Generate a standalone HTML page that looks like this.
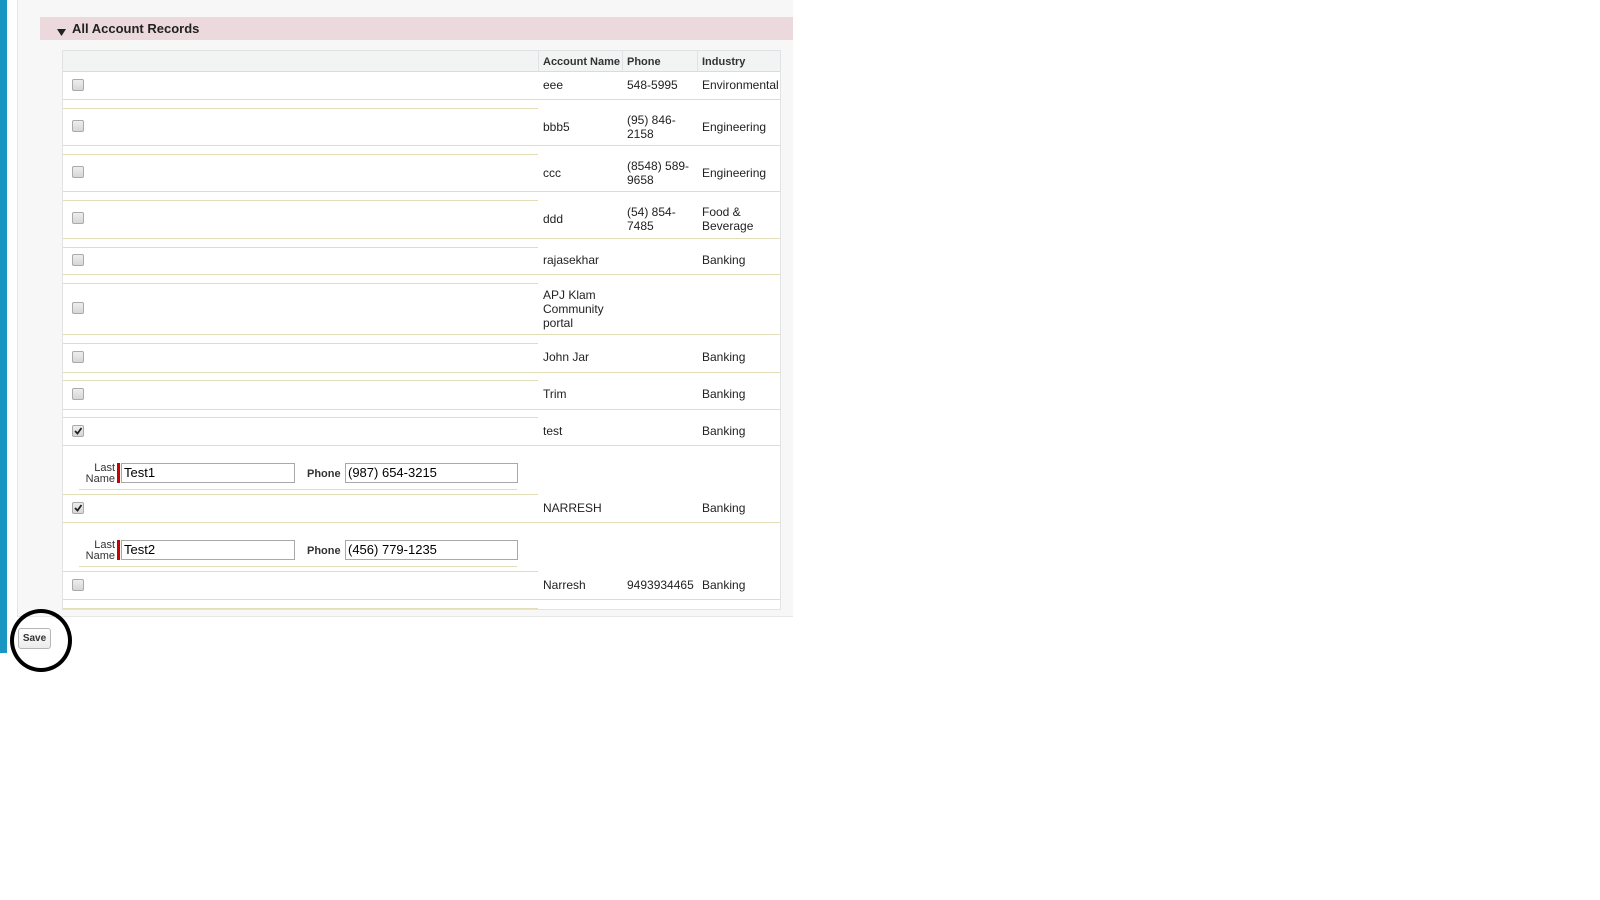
<!DOCTYPE html>
<html><head><meta charset="utf-8"><style>
*{margin:0;padding:0;box-sizing:border-box}
body{width:1600px;height:900px;background:#fff;position:relative;overflow:hidden;font-family:"Liberation Sans",Arial,sans-serif;font-size:12px;color:#222}
.a{position:absolute}
.hl{position:absolute;height:1px;background:#e3deb8}
.cb{position:absolute;left:72px;width:12px;height:12px;border:1px solid #aaa;border-radius:2px;background:linear-gradient(#eee,#d6d6d6)}
.t{position:absolute;font-size:12px;color:#222;line-height:14px}
.th{position:absolute;top:56px;font-weight:bold;font-size:11px;color:#333}
.vd{position:absolute;top:51px;width:1px;height:20px;background:#e0e3e5}
.inp{position:absolute;height:20px;border:1px solid #a9a9a9;background:#fff;font-size:13px;padding:1px 2px;color:#000;line-height:16px}
.lbl{position:absolute;font-size:11px;color:#333;text-align:right;line-height:11px}
</style></head><body>
<div class="a" style="left:0;top:0;width:7px;height:653px;background:#1a96c2"></div>
<div class="a" style="left:17px;top:0;width:776px;height:617px;background:#f7f7f7;border-left:1px solid #e6e6e6;border-bottom:1px solid #e6e6e6"></div>
<div class="a" style="left:40px;top:17px;width:753px;height:23px;background:#ecd9de"></div>
<svg class="a" style="left:56px;top:27px" width="12" height="10"><polygon points="1,2 10,2 5.5,9" fill="#222"/></svg>
<div class="a" style="left:72px;top:21px;font-weight:bold;font-size:13px;color:#222;line-height:16px">All Account Records</div>
<div class="a" style="left:62px;top:50px;width:719px;height:560px;background:#fff;border:1px solid #e0e3e5"></div>
<div class="a" style="left:63px;top:51px;width:717px;height:20px;background:#f2f3f3"></div>
<div class="vd" style="left:538px"></div><div class="vd" style="left:622px"></div><div class="vd" style="left:697px"></div>
<div class="th" style="left:543px">Account Name</div>
<div class="th" style="left:627px">Phone</div>
<div class="th" style="left:702px">Industry</div>
<div class="hl" style="left:63px;top:71px;width:717px"></div>
<div class="hl" style="left:63px;top:99px;width:717px"></div>
<div class="hl" style="left:63px;top:145px;width:717px"></div>
<div class="hl" style="left:63px;top:191px;width:717px"></div>
<div class="hl" style="left:63px;top:238px;width:717px"></div>
<div class="hl" style="left:63px;top:274px;width:717px"></div>
<div class="hl" style="left:63px;top:334px;width:717px"></div>
<div class="hl" style="left:63px;top:372px;width:717px"></div>
<div class="hl" style="left:63px;top:409px;width:717px"></div>
<div class="hl" style="left:63px;top:445px;width:717px"></div>
<div class="hl" style="left:63px;top:522px;width:717px"></div>
<div class="hl" style="left:63px;top:599px;width:717px"></div>
<div class="hl" style="left:63px;top:108px;width:475px"></div>
<div class="hl" style="left:63px;top:154px;width:475px"></div>
<div class="hl" style="left:63px;top:200px;width:475px"></div>
<div class="hl" style="left:63px;top:247px;width:475px"></div>
<div class="hl" style="left:63px;top:283px;width:475px"></div>
<div class="hl" style="left:63px;top:343px;width:475px"></div>
<div class="hl" style="left:63px;top:380px;width:475px"></div>
<div class="hl" style="left:63px;top:417px;width:475px"></div>
<div class="hl" style="left:79px;top:489px;width:438px"></div>
<div class="hl" style="left:63px;top:494px;width:475px"></div>
<div class="hl" style="left:79px;top:566px;width:438px"></div>
<div class="hl" style="left:63px;top:571px;width:475px"></div>
<div class="hl" style="left:63px;top:608px;width:475px"></div>
<div class="cb" style="top:79px"></div>
<div class="cb" style="top:120px"></div>
<div class="cb" style="top:166px"></div>
<div class="cb" style="top:212px"></div>
<div class="cb" style="top:254px"></div>
<div class="cb" style="top:302px"></div>
<div class="cb" style="top:351px"></div>
<div class="cb" style="top:388px"></div>
<div class="cb" style="top:425px"><svg width="10" height="10" style="position:absolute;left:0;top:0"><path d="M2 5 L4.5 7.5 L8.5 2" stroke="#222" stroke-width="1.8" fill="none"/></svg></div>
<div class="cb" style="top:502px"><svg width="10" height="10" style="position:absolute;left:0;top:0"><path d="M2 5 L4.5 7.5 L8.5 2" stroke="#222" stroke-width="1.8" fill="none"/></svg></div>
<div class="cb" style="top:579px"></div>
<div class="t" style="left:543px;top:78px">eee</div><div class="t" style="left:627px;top:78px">548-5995</div><div class="t" style="left:702px;top:78px">Environmental</div>
<div class="t" style="left:543px;top:120px">bbb5</div><div class="t" style="left:627px;top:113px">(95) 846-<br>2158</div><div class="t" style="left:702px;top:120px">Engineering</div>
<div class="t" style="left:543px;top:166px">ccc</div><div class="t" style="left:627px;top:159px">(8548) 589-<br>9658</div><div class="t" style="left:702px;top:166px">Engineering</div>
<div class="t" style="left:543px;top:212px">ddd</div><div class="t" style="left:627px;top:205px">(54) 854-<br>7485</div><div class="t" style="left:702px;top:205px">Food &amp;<br>Beverage</div>
<div class="t" style="left:543px;top:253px">rajasekhar</div><div class="t" style="left:702px;top:253px">Banking</div>
<div class="t" style="left:543px;top:288px">APJ Klam<br>Community<br>portal</div>
<div class="t" style="left:543px;top:350px">John Jar</div><div class="t" style="left:702px;top:350px">Banking</div>
<div class="t" style="left:543px;top:387px">Trim</div><div class="t" style="left:702px;top:387px">Banking</div>
<div class="t" style="left:543px;top:424px">test</div><div class="t" style="left:702px;top:424px">Banking</div>
<div class="t" style="left:543px;top:501px">NARRESH</div><div class="t" style="left:702px;top:501px">Banking</div>
<div class="t" style="left:543px;top:578px">Narresh</div><div class="t" style="left:627px;top:578px">9493934465</div><div class="t" style="left:702px;top:578px">Banking</div>
<div class="lbl" style="left:81px;top:463px;width:34px">Last<br>Name</div>
<div class="a" style="left:117px;top:463px;width:3px;height:20px;background:#c00"></div>
<div class="inp" style="left:121px;top:463px;width:174px">Test1</div>
<div class="lbl" style="left:307px;top:469px;width:38px;font-weight:bold;text-align:left">Phone</div>
<div class="inp" style="left:345px;top:463px;width:173px">(987) 654-3215</div>
<div class="lbl" style="left:81px;top:540px;width:34px">Last<br>Name</div>
<div class="a" style="left:117px;top:540px;width:3px;height:20px;background:#c00"></div>
<div class="inp" style="left:121px;top:540px;width:174px">Test2</div>
<div class="lbl" style="left:307px;top:546px;width:38px;font-weight:bold;text-align:left">Phone</div>
<div class="inp" style="left:345px;top:540px;width:173px">(456) 779-1235</div>
<div class="a" style="left:18px;top:628px;width:33px;height:21px;border:1px solid #b5b5b5;border-radius:3px;background:linear-gradient(#fff,#ececec);font-size:10px;font-weight:bold;color:#333;text-align:center;line-height:19px">Save</div>
<div class="a" style="left:10px;top:609px;width:62px;height:63px;border:4px solid #000;border-radius:50%"></div>
</body></html>
